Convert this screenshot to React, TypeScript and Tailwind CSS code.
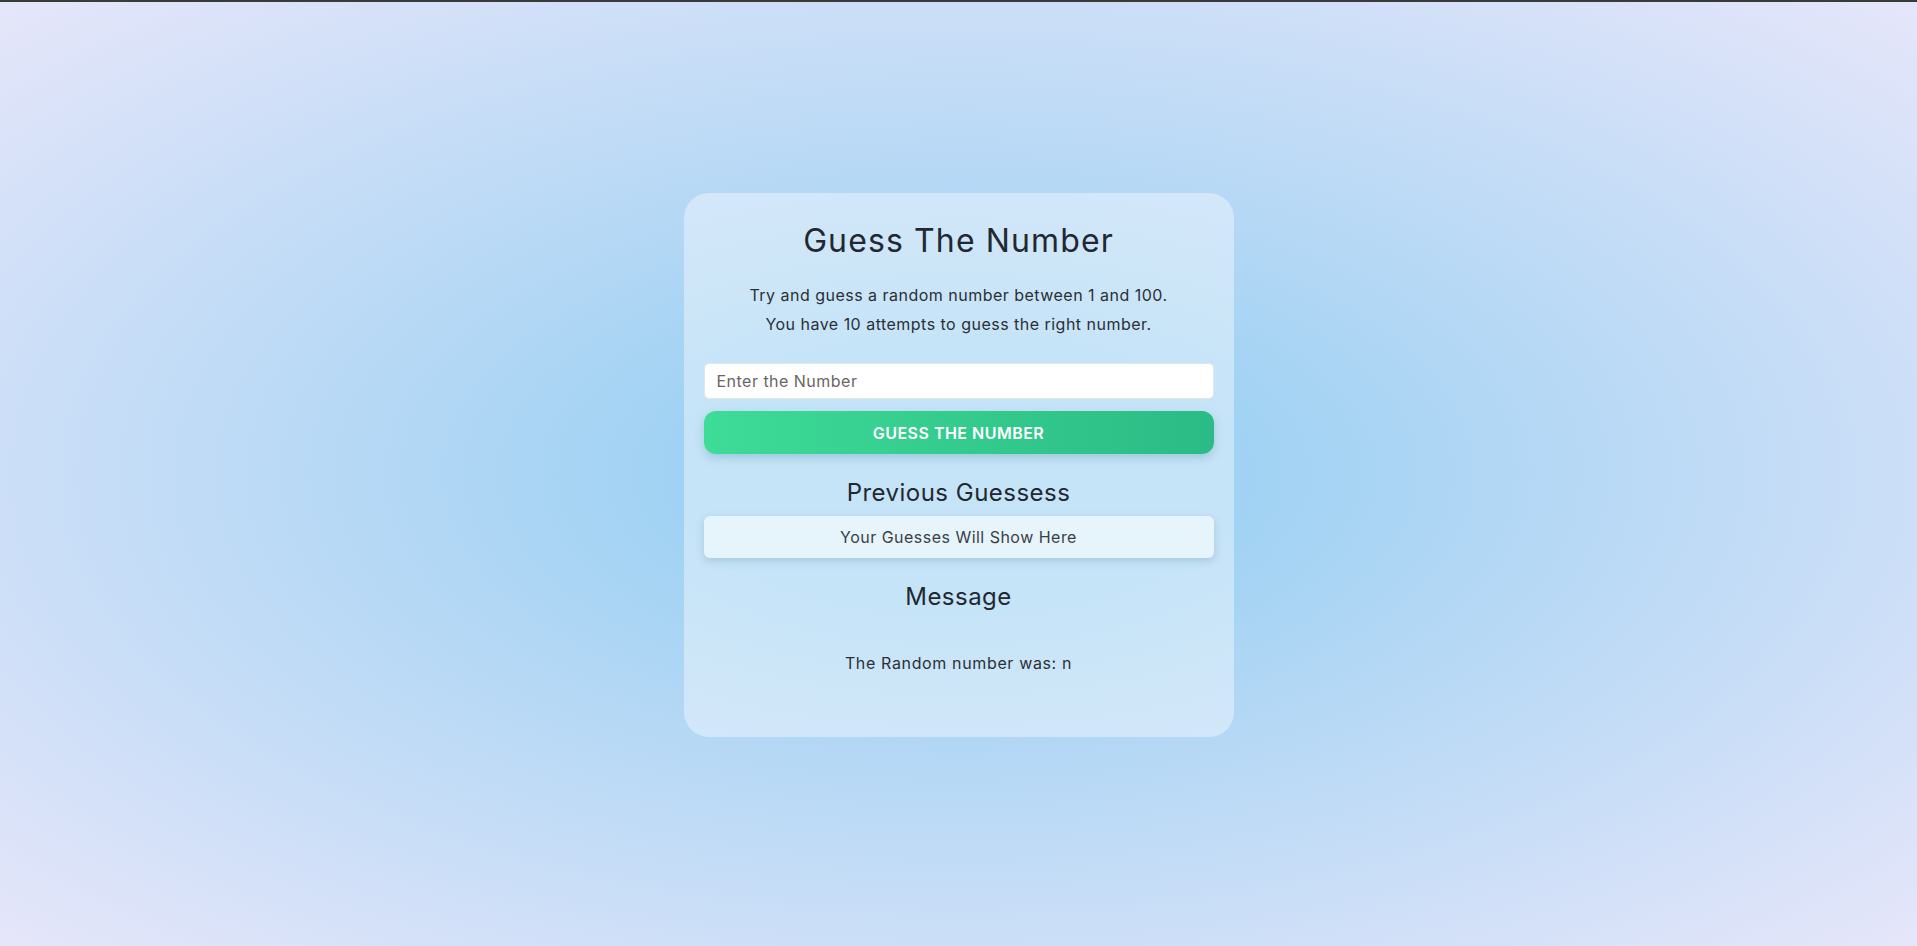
const font = { fontFamily: "Inter, 'Noto Sans', sans-serif" };

export default function App() {
  return (
    <div
      className="min-h-screen w-full bg-[radial-gradient(ellipse_at_center,#a0d2f3_20%,#e6e6fa_100%)] border-t-2 border-[#3a3a3a] text-[#222831] tracking-[0.03em]"
      style={font}
    >
      <div className="flex justify-center pt-[191px] pb-10">
        <div className="w-[550px] rounded-[25px] bg-white/40 px-5 pt-6 pb-[62px] text-center">
          <h1 className="text-[32px] leading-[48px] font-normal tracking-[0.035em]">Guess The Number</h1>
          <div className="mt-4 text-[16px] leading-[29px] text-[#2b2f36]">
            <p>Try and guess a random number between 1 and 100.</p>
            <p>You have 10 attempts to guess the right number.</p>
          </div>

          <input
            type="text"
            placeholder="Enter the Number"
            className="mt-6 block h-9 w-full rounded-[5px] border border-[#dfe6ec] bg-white px-3 text-[16px] tracking-[0.03em] text-[#333] placeholder:text-[#666] outline-none"
          />

          <button className="mt-3 block h-[43px] w-full rounded-[12px] bg-gradient-to-r from-[#3ddc97] to-[#2bbb85] text-[16px] font-semibold uppercase tracking-[0.03em] text-white shadow-[0_4px_10px_rgba(40,120,140,0.25)]">
            Guess The Number
          </button>

          <h2 className="mt-[23px] text-[24px] leading-8 font-normal">Previous Guessess</h2>
          <div className="mt-[7px] flex h-[42px] items-center justify-center rounded-[6px] bg-[#e6f4fc] text-[16px] text-[#3a3f45] shadow-[0_3px_8px_rgba(50,100,140,0.22)]">
            Your Guesses Will Show Here
          </div>

          <h2 className="mt-[23px] text-[24px] leading-8 font-normal">Message</h2>
          <p className="mt-[38px] text-[16px] leading-6 text-[#2b2f36] tracking-[0.04em]">The Random number was: n</p>
        </div>
      </div>
    </div>
  );
}
